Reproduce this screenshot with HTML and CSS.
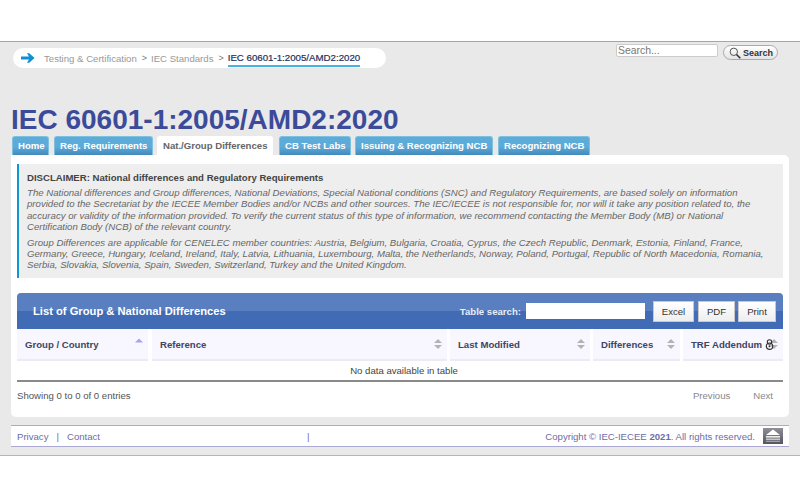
FILE: index.html
```html
<!DOCTYPE html>
<html lang="en">
<head>
<meta charset="utf-8">
<title>IEC 60601-1:2005/AMD2:2020</title>
<link rel="stylesheet" href="styles.css">
</head>
<body>
<div class="top-gap"></div>
<main class="shell">
  <header class="head">
    <nav class="crumbs">
      <svg class="arrow" width="14" height="12" viewBox="0 0 14 12"><path d="M0 4.6H8L6 1.2H8.2L13.6 6 8.2 10.8H6L8 7.4H0Z" fill="#0f8fd6"/></svg>
      <a class="crumb first">Testing &amp; Certification</a>
      <span class="sep">&gt;</span>
      <a class="crumb">IEC Standards</a>
      <span class="sep">&gt;</span>
      <a class="crumb current">IEC 60601-1:2005/AMD2:2020</a>
    </nav>
    <form class="site-search">
      <input class="site-input" type="text" placeholder="Search...">
      <button class="site-btn" type="button">
        <svg width="12" height="12" viewBox="0 0 12 12"><circle cx="4.8" cy="4.8" r="3.7" fill="none" stroke="#555" stroke-width="1"/><path d="M7.5 7.5L11.3 11.3" stroke="#333" stroke-width="1.6"/></svg>
        Search
      </button>
    </form>
  </header>
  <h1 class="title">IEC 60601-1:2005/AMD2:2020</h1>
  <div class="tabs">
    <a class="tab">Home</a>
    <a class="tab">Reg. Requirements</a>
    <a class="tab active">Nat./Group Differences</a>
    <a class="tab">CB Test Labs</a>
    <a class="tab">Issuing &amp; Recognizing NCB</a>
    <a class="tab">Recognizing NCB</a>
  </div>
  <section class="panel">
    <div class="note">
      <h2 class="note-title">DISCLAIMER: National differences and Regulatory Requirements</h2>
      <p class="note-text">The National differences and Group differences, National Deviations, Special National conditions (SNC) and Regulatory Requirements, are based solely on information<br>provided to the Secretariat by the IECEE Member Bodies and/or NCBs and other sources. The IEC/IECEE is not responsible for, nor will it take any position related to, the<br>accuracy or validity of the information provided. To verify the current status of this type of information, we recommend contacting the Member Body (MB) or National<br>Certification Body (NCB) of the relevant country.</p>
      <p class="note-text">Group Differences are applicable for CENELEC member countries: Austria, Belgium, Bulgaria, Croatia, Cyprus, the Czech Republic, Denmark, Estonia, Finland, France,<br>Germany, Greece, Hungary, Iceland, Ireland, Italy, Latvia, Lithuania, Luxembourg, Malta, the Netherlands, Norway, Poland, Portugal, Republic of North Macedonia, Romania,<br>Serbia, Slovakia, Slovenia, Spain, Sweden, Switzerland, Turkey and the United Kingdom.</p>
    </div>
    <div class="table-bar">
      <div class="table-title">List of Group &amp; National Differences</div>
      <div class="table-tools">
        <label class="table-label">Table search:</label>
        <input class="table-input" type="text">
        <button class="tool" type="button">Excel</button>
        <button class="tool" type="button">PDF</button>
        <button class="tool" type="button">Print</button>
      </div>
    </div>
    <div class="cols">
      <div class="col c1">Group / Country<svg class="sort" width="10" height="12" viewBox="0 0 10 12"><path d="M1 4.5L5 .5 9 4.5Z" fill="#a3a3f5"/></svg></div>
      <div class="col c2">Reference<svg class="sort" width="10" height="12" viewBox="0 0 10 12"><path d="M1 5L5 1 9 5ZM1 7L5 11 9 7Z" fill="#b3b3b3"/></svg></div>
      <div class="col c3">Last Modified<svg class="sort" width="10" height="12" viewBox="0 0 10 12"><path d="M1 5L5 1 9 5ZM1 7L5 11 9 7Z" fill="#b3b3b3"/></svg></div>
      <div class="col c4">Differences<svg class="sort" width="10" height="12" viewBox="0 0 10 12"><path d="M1 5L5 1 9 5ZM1 7L5 11 9 7Z" fill="#b3b3b3"/></svg></div>
      <div class="col c5">TRF Addendum
        <svg class="sort over" width="10" height="12" viewBox="0 0 10 12"><path d="M1 5L5 1 9 5ZM1 7L5 11 9 7Z" fill="#b3b3b3"/></svg>
        <svg class="lock" width="9" height="11" viewBox="0 0 9 11"><circle cx="4.5" cy="3" r="2.2" fill="none" stroke="#333" stroke-width="1.1"/><circle cx="4.5" cy="7.2" r="3.2" fill="none" stroke="#333" stroke-width="1.2"/><circle cx="4.5" cy="7.2" r="1" fill="#333"/></svg>
      </div>
    </div>
    <div class="empty">No data available in table</div>
    <div class="table-foot">
      <span class="info">Showing 0 to 0 of 0 entries</span>
      <span class="pager"><a class="page">Previous</a><a class="page">Next</a></span>
    </div>
  </section>
  <footer class="foot">
    <div class="foot-links"><a class="foot-link">Privacy</a><span class="bar">|</span><a class="foot-link">Contact</a></div>
    <span class="bar mid">|</span>
    <div class="copy">Copyright © IEC-IECEE <b>2021</b>. All rights reserved.</div>
    <a class="to-top"><svg class="to-top-icon" width="20" height="16" viewBox="0 0 20 16"><path d="M10 1.5L17 7H3Z" fill="#fff"/><path d="M3 8h14v1.6H3Z" fill="#eee"/><path d="M3 10.5h14v1.4H3Z" fill="#d0d0d6"/><path d="M3 12.7h14v1.2H3Z" fill="#a8a8b0"/></svg></a>
  </footer>
</main>
</body>
</html>
```
FILE: styles.css
```css
* { box-sizing: border-box; }
html, body { margin: 0; padding: 0; background: #fff; }
body { font-family: "Liberation Sans", Arial, sans-serif; font-size: 9.6px; color: #444; }
.top-gap { height: 41px; }
.shell { height: 415px; background: #e9e9e9; border-top: 1px solid #a6a6a6; border-bottom: 1px solid #b3b6c2; padding: 0 11px; }
.head { height: 63px; display: flex; justify-content: space-between; align-items: flex-start; padding-left: 2px; }
.crumbs { margin-top: 6px; width: 373px; height: 20px; border-radius: 10px; background: #fff; display: flex; align-items: center; padding-left: 8px; }
.arrow { margin-right: 9px; flex: none; }
.crumb { color: #999; }
.sep { color: #777; margin: 0 4px 0 5px; font-size: 9px; }
.current { color: #24305e; font-size: 9.7px; -webkit-text-stroke: .2px #24305e; line-height: 13px; border-bottom: 2px solid #47b3e0; margin-top: 2px; padding-bottom: 1px; }
.site-search { margin-top: 2px; margin-right: 11px; display: flex; align-items: flex-start; gap: 5px; }
.site-input { width: 102px; height: 13px; border: 1px solid #ccc; border-radius: 2px; background: #fff; padding: 0 1px; font: 10.4px "Liberation Sans", Arial, sans-serif; outline: 0; }
.site-input::placeholder { color: #777; opacity: 1; }
.site-btn { width: 55px; height: 15px; margin-top: 1px; border: 1px solid #aaa; border-radius: 8px; background: linear-gradient(#fff, #e4e4e4); display: flex; align-items: center; gap: 2px; padding: 0 0 0 5px; font: bold 9px "Liberation Sans", Arial, sans-serif; color: #333; }
.title { margin: 0; height: 30px; font-size: 28px; line-height: 30px; font-weight: 700; color: #3b4b9a; white-space: nowrap; }
.tabs { height: 19px; display: flex; padding-left: 1px; margin-top: 1px; }
.tab { height: 19px; line-height: 18px; padding: 0 5px; margin-right: 5px; border-radius: 3px 3px 0 0; border: 1px solid #7fbfe0; border-bottom: 0; background: linear-gradient(#5cabd9 55%, #4389bd); color: #fff; font-weight: 700; white-space: nowrap; }
.tab:nth-child(1) { width: 37px; }
.tab:nth-child(2) { width: 99px; margin-right: 4px; }
.tab.active { width: 116px; margin-right: 6px; background: #fff; border-color: #fff; color: #666; text-align: center; }
.tab:nth-child(4) { width: 72px; margin-right: 4px; }
.tab:nth-child(5) { width: 138px; }
.tab:nth-child(6) { width: 92px; }
.panel { height: 262px; background: #fff; border-radius: 0 5px 5px 5px; padding: 9px 6px 0; }
.note { height: 114px; background: #eee; border-left: 2px solid #0d96d2; padding: 8px 8px 0; }
.note-title { margin: 0 0 3px; font-size: 9.6px; line-height: 12px; font-weight: 700; color: #444; }
.note-text { margin: 0 0 4px; font-size: 9.63px; font-style: italic; line-height: 11.4px; color: #666; white-space: nowrap; }
.table-bar { margin-top: 15px; height: 36px; border-radius: 4px 4px 0 0; background: linear-gradient(#5a7fc0 50%, #416bb4 50%); display: flex; justify-content: space-between; align-items: center; padding: 0 7px 0 16px; }
.table-title { color: #fff; font-size: 11.2px; font-weight: 700; }
.table-tools { display: flex; align-items: center; }
.table-label { color: #e8eef8; font-weight: 700; margin-right: 5px; }
.table-input { width: 119px; height: 16px; border: 0; background: #fff; margin-right: 8px; }
.tool { height: 21px; margin-left: 4px; border: 1px solid #c8c8c8; background: linear-gradient(#fff, #eee); font: 9.6px "Liberation Sans", Arial, sans-serif; color: #333; padding: 0; }
.tool:nth-child(3) { width: 41px; margin-left: 0; }
.tool:nth-child(4) { width: 37px; }
.tool:nth-child(5) { width: 38px; margin-left: 3px; }
.cols { display: flex; height: 32px; }
.col { height: 32px; background: #f8f6ff; border-bottom: 2px solid #ecebf3; display: flex; align-items: center; justify-content: space-between; font-weight: 700; color: #3f4560; padding: 0 4px 0 8px; margin-right: 3px; position: relative; white-space: nowrap; }
.c1 { width: 131px; margin-right: 4px; }
.c2 { width: 295px; }
.c3 { width: 140px; }
.c4 { width: 87px; }
.c5 { width: 100px; margin-right: 0; }
.lock { position: absolute; left: 82px; top: 10px; }
.sort { flex: none; }
.empty { height: 21px; line-height: 19px; text-align: center; padding-left: 8px; color: #444; border-bottom: 2px solid #8a8a8a; }
.table-foot { display: flex; justify-content: space-between; align-items: center; height: 26px; padding-right: 10px; }
.info { color: #555; }
.pager { display: flex; gap: 23px; color: #888; }
.foot { margin-top: 8px; height: 22px; background: #fff; border-top: 1px solid #a9a9d3; border-bottom: 1px solid #a9a9d3; display: flex; align-items: center; padding: 0 6px; color: #6d6da8; }
.foot-links { display: flex; width: 290px; }
.foot-link { color: #6d6da8; }
.bar { margin: 0 8px; }
.mid { margin: 0; }
.copy { margin-left: auto; margin-right: 8px; }
.to-top { width: 20px; height: 16px; display: block; background: linear-gradient(#8f8f99, #55555f); }
.to-top-icon { display: block; }
```
